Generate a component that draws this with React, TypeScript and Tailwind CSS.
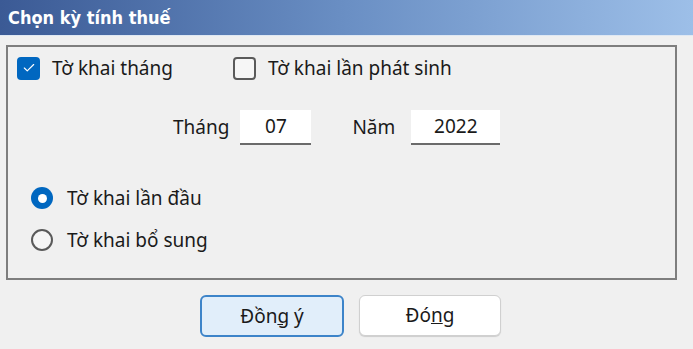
import { Check } from "lucide-react";

const font = { fontFamily: '"Noto Sans", "Open Sans", sans-serif' };

function CheckBox({ checked, label }: { checked: boolean; label: string }) {
  return (
    <label className="flex h-[24px] items-center gap-[12px]">
      {checked ? (
        <span className="flex h-[23px] w-[23px] items-center justify-center rounded-[4px] bg-[#0067c0]">
          <Check size={14} strokeWidth={2} className="text-white" />
        </span>
      ) : (
        <span className="h-[23px] w-[23px] rounded-[4px] border-2 border-[#5a5a5a] bg-[#f6f6f6]" />
      )}
      <span className="text-[19px] leading-none text-[#1a1a1a]">{label}</span>
    </label>
  );
}

function Radio({ checked, label }: { checked: boolean; label: string }) {
  return (
    <label className="flex h-[24px] items-center gap-[14px]">
      {checked ? (
        <span className="flex h-[22px] w-[22px] items-center justify-center rounded-full bg-[#0067c0]">
          <span className="h-[9px] w-[9px] rounded-full bg-white" />
        </span>
      ) : (
        <span className="h-[22px] w-[22px] rounded-full border-2 border-[#5a5a5a] bg-[#f6f6f6]" />
      )}
      <span className="text-[19px] leading-none text-[#1a1a1a]">{label}</span>
    </label>
  );
}

export default function App() {
  return (
    <div className="flex h-[349px] w-[693px] flex-col bg-[#f0f0f0]" style={font}>
      <div className="flex h-[36px] items-center border-b border-[#dfe8f3] bg-gradient-to-r from-[#3b5a95] via-[#6a8fc4] to-[#9dbfe8] pl-[8px]">
        <span
          className="text-[18px] font-bold text-white"
          style={{ fontFamily: '"DejaVu Sans Condensed", "Liberation Sans", sans-serif' }}
        >
          Chọn kỳ tính thuế
        </span>
      </div>

      <div className="mx-[6px] mt-[9px] flex h-[235px] w-[671px] flex-col border-2 border-[#7e7e7e] pl-[9px]">
        <div className="mt-[9px] flex items-center gap-[60px]">
          <CheckBox checked label="Tờ khai tháng" />
          <CheckBox checked={false} label="Tờ khai lần phát sinh" />
        </div>

        <div className="mt-[30px] flex items-center pl-[156px]">
          <span className="text-[19px] text-[#1a1a1a]">Tháng</span>
          <div className="ml-[11px] flex h-[35px] w-[71px] items-center justify-center border-b-2 border-[#6b6b6b] bg-white text-[19px] text-[#1a1a1a]">
            07
          </div>
          <span className="ml-[41px] text-[19px] text-[#1a1a1a]">Năm</span>
          <div className="ml-[16px] flex h-[35px] w-[89px] items-center justify-center border-b-2 border-[#6b6b6b] bg-white text-[19px] text-[#1a1a1a]">
            2022
          </div>
        </div>

        <div className="mt-[41px] flex flex-col gap-[18px] pl-[14px]">
          <Radio checked label="Tờ khai lần đầu" />
          <Radio checked={false} label="Tờ khai bổ sung" />
        </div>
      </div>

      <div className="mt-[15px] flex justify-center gap-[15px] pl-[8px]">
        <button className="flex h-[42px] w-[144px] items-center justify-center rounded-[6px] border-2 border-[#3d84c9] bg-[#e1eefa] text-[19px] text-[#1a1a1a]">
          Đồn<u>g</u>&nbsp;ý
        </button>
        <button className="flex h-[41px] w-[142px] items-center justify-center rounded-[6px] border border-[#d0d0d0] bg-white text-[19px] text-[#1a1a1a] shadow-[0_1px_1px_rgba(0,0,0,0.15)]">
          Đó<u>n</u>g
        </button>
      </div>
    </div>
  );
}
